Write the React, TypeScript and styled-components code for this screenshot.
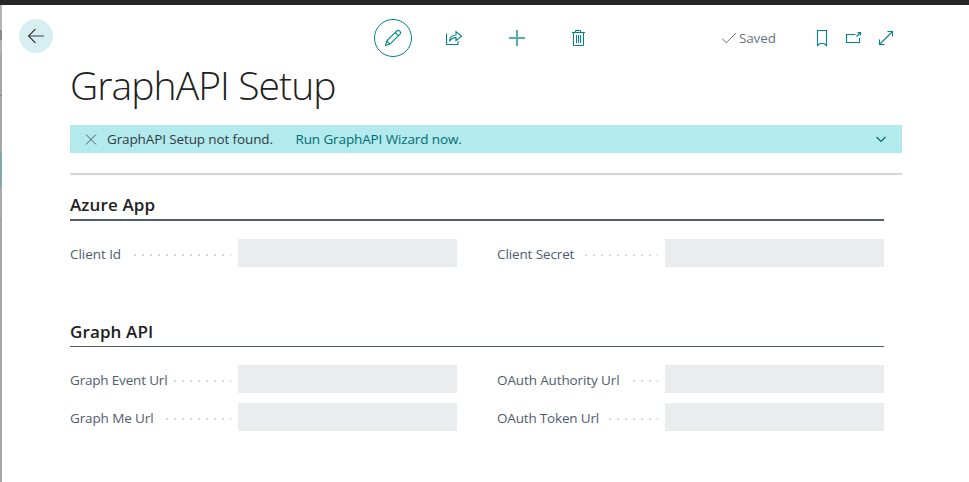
import React from "react";
import styled, { createGlobalStyle } from "styled-components";

const Global = createGlobalStyle`
  * { box-sizing: border-box; }
  html, body { margin: 0; background: #fff; }
  body { font-family: "Open Sans", "Noto Sans", sans-serif; font-size: 13.5px; color: #505c6d; overflow: hidden; }
  svg { display: block; fill: none; flex: none; }
`;

const Page = styled.div`
  height: 482px;
  display: grid;
  grid-template: 5px 1fr / 2px 1fr;
`;
const TopBar = styled.div`
  grid-column: 1 / 3;
  background: #262626;
`;
const Backdrop = styled.div`
  background: linear-gradient(#b3b3b3 0 25px, #8a8a8a 25px 35px, #b0b0b0 35px 49px, #a6a6a6 49px 90px, #8b8b8b 90px 91px, #a8a8a8 91px 147px, #83a9ac 147px 182px, #aaa 182px 214px, #9b9b9b 214px 215px, #a6a6a6 215px);
`;
const Card = styled.main`
  display: flex;
  flex-direction: column;
  padding-left: 68px;
`;
const Header = styled.header`
  display: flex;
  align-items: center;
  height: 38px;
  margin: 14px 0 0 -51px;
`;
const IconButton = styled.button<{ $size: number; $gap: number; $ring?: boolean; $filled?: boolean }>`
  display: grid;
  place-items: center;
  flex: none;
  width: ${(p) => p.$size}px;
  height: ${(p) => p.$size}px;
  margin: 0 0 0 ${(p) => p.$gap}px;
  padding: 0;
  border: ${(p) => (p.$ring ? "1px solid #00838a" : "0")};
  border-radius: 50%;
  background: ${(p) => (p.$filled ? "#d8eff1" : "transparent")};
  color: ${(p) => (p.$filled ? "#3c3c3c" : "#00838a")};
`;
const BackButton = styled(IconButton)`
  margin-top: -4px;
`;
const Status = styled.div`
  display: flex;
  align-items: center;
  width: 56px;
  margin-left: 134px;
  font-size: 13.5px;
  letter-spacing: -0.15px;
  line-height: 18px;
  white-space: nowrap;
  color: #6b7280;
  svg { margin-right: 2px; }
`;
const Title = styled.h1`
  margin: 1px 0 0;
  height: 67px;
  font-size: 39px;
  font-weight: 300;
  line-height: 54px;
  letter-spacing: -0.92px;
  color: #212121;
  white-space: nowrap;
`;
const Notice = styled.div`
  display: flex;
  align-items: center;
  width: 832px;
  height: 28px;
  padding: 0 15px;
  background: #b2eaed;
  color: #323c3e;
  letter-spacing: -0.12px;
  white-space: nowrap;
`;
const Message = styled.span`
  width: 188.5px;
  margin-left: 10px;
`;
const Action = styled.a`
  flex: 1;
  color: #006d75;
`;
const Divider = styled.hr`
  width: 832px;
  height: 2px;
  margin: 20px 0 0;
  border: 0;
  background: #d3d5da;
`;
const Section = styled.section<{ $top: number }>`
  width: 814px;
  margin-top: ${(p) => p.$top}px;
`;
const SectionTitle = styled.h2<{ $rule: number; $height: number }>`
  margin: 0;
  height: ${(p) => p.$height}px;
  border-bottom: ${(p) => p.$rule}px solid #505c6d;
  font-size: 17px;
  font-weight: 600;
  line-height: 24px;
  letter-spacing: 0.12px;
  color: #212121;
`;
const Fields = styled.div`
  display: grid;
  grid-template-columns: 387px 387px;
  gap: 10px 40px;
  margin-top: 18px;
`;
const Field = styled.label`
  display: flex;
  align-items: center;
  height: 28px;
`;
const Caption = styled.span<{ $spacing?: number }>`
  width: 161px;
  display: flex;
  align-items: center;
  padding-top: 2px;
  white-space: nowrap;
  line-height: 18px;
  letter-spacing: ${(p) => p.$spacing ?? -0.12}px;
`;
const Leader = styled.i<{ $dots: number }>`
  width: ${(p) => p.$dots * 8 + 1}px;
  height: 2px;
  margin: 1px 0 0 auto;
  background: repeating-linear-gradient(90deg, #d9d9d9 0 2px, transparent 2px 8px);
`;
const Input = styled.input`
  width: 219px;
  height: 28px;
  margin: 0 0 0 7px;
  padding: 0;
  border: 0;
  background: #ebecee;
`;

type FieldData = { label: string; dots: number; spacing?: number };
const azure: FieldData[] = [
  { label: "Client Id", dots: 12, spacing: -0.05 },
  { label: "Client Secret", dots: 9 },
];
const graph: FieldData[] = [
  { label: "Graph Event Url", dots: 7, spacing: -0.18 },
  { label: "OAuth Authority Url", dots: 3 },
  { label: "Graph Me Url", dots: 8 },
  { label: "OAuth Token Url", dots: 6, spacing: -0.18 },
];

const FieldList = ({ items }: { items: FieldData[] }) => (
  <Fields>
    {items.map((f) => (
      <Field key={f.label}>
        <Caption $spacing={f.spacing}>
          {f.label}
          <Leader $dots={f.dots} />
        </Caption>
        <Input readOnly />
      </Field>
    ))}
  </Fields>
);

export default function App() {
  return (
    <Page>
      <Global />
      <TopBar />
      <Backdrop />
      <Card>
        <Header>
          <BackButton $size={34} $gap={0} $filled aria-label="Back">
            <svg width="18" height="16" stroke="currentColor" strokeWidth="1.1"><path d="M17 8H1.5M8.5 1L1.5 8l7 7" /></svg>
          </BackButton>
          <IconButton $size={38} $gap={321} $ring aria-label="Edit">
            <svg width="18" height="18" stroke="currentColor" strokeWidth="1.1">
              <path d="M1.5 16.5l1.3-4.6L12.6 2.1a2.2 2.2 0 0 1 3.2 3.2L6 15.1zM2.8 11.9L6 15.1M11.2 3.5l3.3 3.3" />
            </svg>
          </IconButton>
          <IconButton $size={18} $gap={34} aria-label="Share">
            <svg width="18" height="18" stroke="currentColor" strokeWidth="1.1">
              <path d="M.5 4.5v11h11.5V12M3.5 12.3c.2-4 2.6-6.3 6.5-6.3V2.6l5.6 4.6-5.6 4.5V8.6c-2.9 0-5 1.1-6.5 3.7z" />
            </svg>
          </IconButton>
          <IconButton $size={18} $gap={44} aria-label="New">
            <svg width="18" height="18" stroke="#55adb2" strokeWidth="2"><path d="M9 1v16M1 9h16" /></svg>
          </IconButton>
          <IconButton $size={18} $gap={43} aria-label="Delete">
            <svg width="18" height="18" stroke="currentColor">
              <path d="M3 3.5h13M6.5 3V1.5h5V3M4.5 4v12.5h10V4" />
              <path d="M7.5 6v8M9.5 6v8M11.5 6v8" />
            </svg>
          </IconButton>
          <Status>
            <svg width="16" height="14" stroke="currentColor"><path d="M1 7.5l4.3 4.2L15 2" /></svg>
            Saved
          </Status>
          <IconButton $size={18} $gap={36} aria-label="Bookmark">
            <svg width="18" height="18" stroke="currentColor" strokeWidth="1.1">
              <path d="M4.5 1.5h9v15L11 14.5H7l-2.5 2z" />
            </svg>
          </IconButton>
          <IconButton $size={18} $gap={14} aria-label="Open in new window">
            <svg width="18" height="18" stroke="currentColor" strokeWidth="1.1">
              <path d="M10.5 5.5h-9v8h13V9M11.5 7.5l4-4M12.5 3.5h3v3" />
            </svg>
          </IconButton>
          <IconButton $size={18} $gap={14} aria-label="Expand">
            <svg width="18" height="18" stroke="currentColor" strokeWidth="1.1">
              <path d="M2.5 15.5l13-13M10.5 2.5h5v5M2.5 10.5v5h5" />
            </svg>
          </IconButton>
        </Header>
        <Title>GraphAPI Setup</Title>
        <Notice>
          <svg width="12" height="11" stroke="#505c6d"><path d="M1 .5l10 10M11 .5l-10 10" /></svg>
          <Message>GraphAPI Setup not found.</Message>
          <Action>Run GraphAPI Wizard now.</Action>
          <svg width="12" height="8" stroke="#006d75" strokeWidth="1.2"><path d="M1.5 2L6 6.5 10.5 2" /></svg>
        </Notice>
        <Divider />
        <Section $top={18}>
          <SectionTitle $rule={2} $height={28}>Azure App</SectionTitle>
          <FieldList items={azure} />
        </Section>
        <Section $top={53}>
          <SectionTitle $rule={1} $height={27}>Graph API</SectionTitle>
          <FieldList items={graph} />
        </Section>
      </Card>
    </Page>
  );
}
